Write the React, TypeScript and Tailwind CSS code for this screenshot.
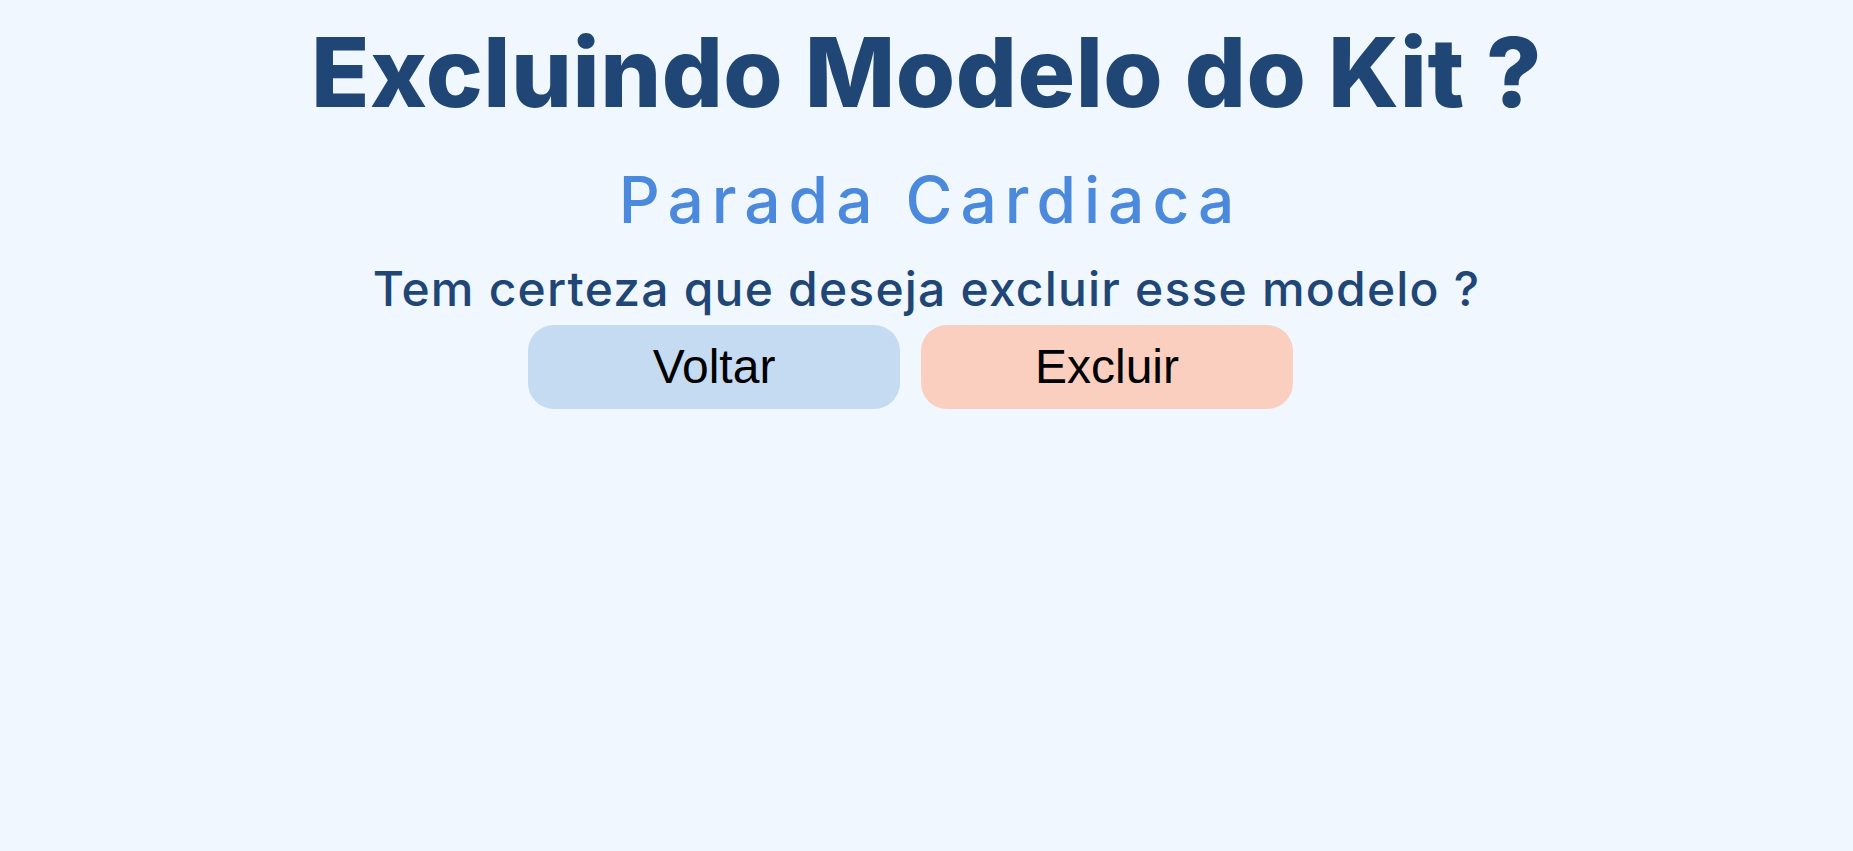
import React from 'react';

export default function App() {
  return (
    <div className="min-h-screen w-full bg-[#f0f7ff] flex flex-col items-center pt-[24px]">
      <h1 className="text-[96px] leading-[96px] font-extrabold tracking-[0.5px] text-[#204675] font-['Inter',sans-serif]">
        Excluindo Modelo do Kit ?
      </h1>
      <h2 className="mt-[48px] pl-[8px] text-[64px] leading-[64px] font-medium tracking-[8px] text-[#4a89dc] font-['Inter',sans-serif]">
        Parada Cardiaca
      </h2>
      <p className="mt-[33px] text-[48px] leading-[48px] font-medium tracking-[1.2px] text-[#204675] font-['Inter',sans-serif]">
        Tem certeza que deseja excluir esse modelo ?
      </p>
      <div className="mt-[12px] flex gap-[21px] pr-[32px]">
        <button className="w-[372px] h-[84px] rounded-[26px] bg-[#c5dbf2] text-black text-[48px] font-['Liberation_Sans',Arial,sans-serif] flex items-center justify-center">
          Voltar
        </button>
        <button className="w-[372px] h-[84px] rounded-[26px] bg-[#fbcfbf] text-black text-[48px] font-['Liberation_Sans',Arial,sans-serif] flex items-center justify-center">
          Excluir
        </button>
      </div>
    </div>
  );
}
